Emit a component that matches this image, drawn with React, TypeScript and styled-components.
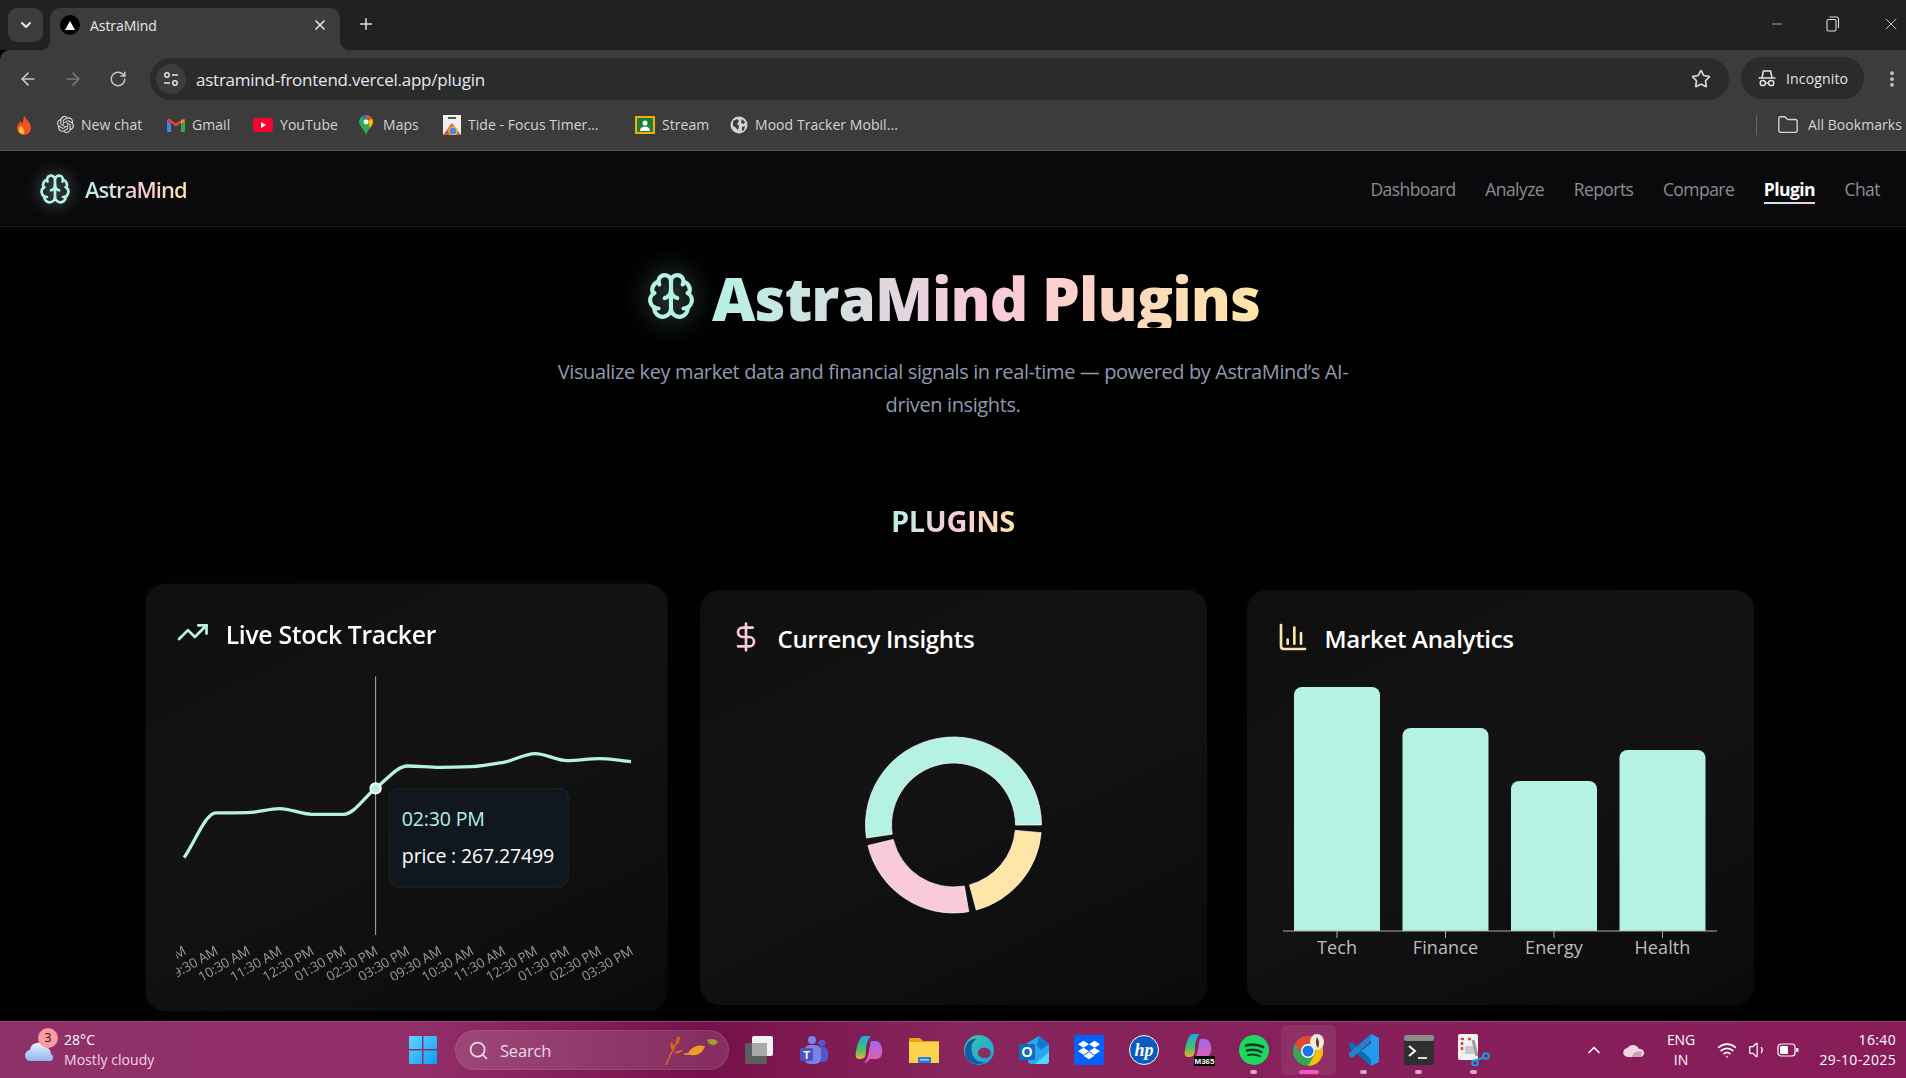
import React, { FC } from 'react';
import styled, { createGlobalStyle } from 'styled-components';
import {
  ArrowLeft,
  ArrowRight,
  Brain,
  ChartColumn,
  ChevronDown,
  ChevronUp,
  DollarSign,
  EllipsisVertical,
  Folder,
  Minus,
  Plus,
  RotateCw,
  Search,
  Star,
  TrendingUp,
  Volume1,
  Wifi,
  X,
} from 'lucide-react';
import { FaDropbox } from 'react-icons/fa';
import { SiOpenai } from 'react-icons/si';

const MINT = '#b5f2e4';
const PINK = '#f9c9dc';
const AMBER = '#ffe5a8';
const UI_FONT = `'Open Sans', 'Noto Sans', sans-serif`;

const GlobalStyle = createGlobalStyle`
  html, body {
    margin: 0;
    padding: 0;
    background: #000;
    overflow: hidden;
  }
  * { box-sizing: border-box; }
  #root { height: 100vh; }
`;

const Screen = styled.div`
  display: flex;
  flex-direction: column;
  height: 100vh;
  font-family: ${UI_FONT};
  overflow: hidden;
`;

/* ---------- browser chrome ---------- */

const TabStrip = styled.div`
  display: flex;
  align-items: flex-end;
  height: 50px;
  background: #202222;
  padding-left: 8px;
  color: #e6e6e6;
`;

const TabSearch = styled.div`
  width: 35px;
  height: 34px;
  margin-bottom: 8px;
  border-radius: 9px;
  background: #3c3c3c;
  display: flex;
  align-items: center;
  justify-content: center;
`;

const Tab = styled.div`
  position: relative;
  width: 290px;
  height: 42px;
  margin-left: 7px;
  padding: 0 12px 8px 10px;
  background: #3c3c3c;
  border-radius: 10px 10px 0 0;
  display: flex;
  align-items: center;
  gap: 10px;
  &::before,
  &::after {
    content: '';
    position: absolute;
    bottom: 0;
    width: 10px;
    height: 10px;
  }
  &::before {
    left: -10px;
    background: radial-gradient(circle at 0 0, #202222 10px, #3c3c3c 10.5px);
  }
  &::after {
    right: -10px;
    background: radial-gradient(circle at 100% 0, #202222 10px, #3c3c3c 10.5px);
  }
`;

const Favicon = styled.div`
  width: 20px;
  height: 20px;
  border-radius: 50%;
  background: #000;
  display: flex;
  align-items: center;
  justify-content: center;
  &::after {
    content: '';
    border-left: 5px solid transparent;
    border-right: 5px solid transparent;
    border-bottom: 9px solid #fff;
  }
`;

const TabTitle = styled.span`
  flex: 1;
  font-size: 14px;
  letter-spacing: -0.05px;
  color: #e8e8e8;
`;

const NewTab = styled.div`
  margin: 0 0 17px 17px;
  display: flex;
`;

const WindowControls = styled.div`
  margin-left: auto;
  align-self: flex-start;
  display: flex;
  align-items: center;
  height: 48px;
  padding-right: 5px;
  gap: 41px;
`;

const Toolbar = styled.div`
  display: flex;
  align-items: flex-end;
  height: 50px;
  padding-left: 5px;
  background: #3c3c3c;
  border-radius: 10px 0 0 0;
`;

const ToolButton = styled.div<{ $dim?: boolean }>`
  width: 45px;
  height: 42px;
  display: flex;
  align-items: center;
  justify-content: center;
  color: ${(p) => (p.$dim ? '#7a7a7a' : '#c7c7c7')};
`;

const Omnibox = styled.div`
  flex: 1;
  height: 42px;
  margin-left: 10px;
  padding: 0 18px 0 6px;
  background: #2b2b2b;
  border-radius: 21px;
  display: flex;
  align-items: center;
`;

const SiteInfo = styled.div`
  width: 30px;
  height: 30px;
  border-radius: 50%;
  background: #3c3c3c;
  display: flex;
  align-items: center;
  justify-content: center;
`;

const Url = styled.span`
  flex: 1;
  margin-left: 10px;
  font-size: 17px;
  letter-spacing: -0.24px;
  color: #e3e8ef;
`;

const IncognitoPill = styled.div`
  width: 123px;
  height: 42px;
  margin: 0 0 1px 12px;
  padding-left: 16px;
  gap: 9px;
  border-radius: 21px;
  background: #2b2b2b;
  color: #e3e3e3;
  font-size: 14px;
  letter-spacing: 0.15px;
  display: flex;
  align-items: center;
`;

const MenuDots = styled.div`
  width: 42px;
  height: 42px;
  padding-left: 18px;
  display: flex;
  align-items: center;
  color: #c7c7c7;
`;

const BookmarkBar = styled.div`
  display: flex;
  align-items: center;
  height: 51px;
  padding: 0 0 1px 16px;
  background: #3c3c3c;
  border-bottom: 1px solid #565656;
`;

const Bookmark = styled.div<{ $width: number }>`
  width: ${(p) => p.$width}px;
  display: flex;
  align-items: center;
  gap: 7px;
  font-size: 14px;
  letter-spacing: 0.05px;
  color: #cfd3da;
  white-space: nowrap;
`;

const BookmarkDivider = styled.div`
  width: 1px;
  height: 20px;
  margin-left: auto;
  background: #666;
`;

const AllBookmarks = styled.div`
  width: 149px;
  padding-left: 20px;
  display: flex;
  align-items: center;
  gap: 9px;
  font-size: 14px;
  letter-spacing: 0.05px;
  color: #cfd3da;
  white-space: nowrap;
`;

/* ---------- page ---------- */

const Page = styled.div`
  flex: 1;
  min-height: 0;
  background: #000;
  overflow: hidden;
`;

const NavBar = styled.nav`
  display: flex;
  align-items: center;
  height: 76px;
  padding: 0 26px 0 39px;
  background: #0a0a0c;
  border-bottom: 1px solid #1f1f22;
`;

const gradientText = `
  background: linear-gradient(90deg, ${MINT}, ${PINK}, ${AMBER});
  -webkit-background-clip: text;
  background-clip: text;
  color: transparent;
`;

const Logo = styled.div`
  display: flex;
  align-items: center;
  gap: 14px;
  svg {
    color: ${MINT};
    filter: drop-shadow(0 0 8px rgba(181, 242, 228, 0.55));
  }
`;

const LogoText = styled.span`
  ${gradientText}
  font-size: 22px;
  font-weight: 600;
  letter-spacing: -0.95px;
`;

const NavLinks = styled.div`
  margin-left: auto;
  display: flex;
  gap: 29.5px;
`;

const NavLink = styled.a<{ $active?: boolean }>`
  position: relative;
  font-size: 17.5px;
  letter-spacing: -0.55px;
  font-weight: ${(p) => (p.$active ? 700 : 400)};
  color: ${(p) => (p.$active ? '#fff' : '#8d8d92')};
  ${(p) =>
    p.$active &&
    `&::after {
      content: '';
      position: absolute;
      left: 0;
      right: 0;
      bottom: -3px;
      height: 2px;
      background: linear-gradient(90deg, ${MINT}, ${PINK});
    }`}
`;

const Hero = styled.section`
  display: flex;
  flex-direction: column;
  align-items: center;
  padding-top: 41px;
`;

const HeroTitleRow = styled.div`
  display: flex;
  align-items: center;
  gap: 16px;
  svg {
    margin-top: -4px;
    color: ${MINT};
    filter: drop-shadow(0 0 14px rgba(181, 242, 228, 0.5));
  }
`;

const HeroTitle = styled.h1`
  ${gradientText}
  margin: 0;
  font-size: 60px;
  line-height: 60px;
  font-weight: 800;
  letter-spacing: -0.95px;
`;

const HeroText = styled.p`
  width: 800px;
  margin: 27px 0 0;
  font-size: 20px;
  line-height: 33px;
  letter-spacing: -0.39px;
  text-align: center;
  color: #9199ae;
`;

const SectionTitle = styled.h2`
  ${gradientText}
  margin: 80px 0 0;
  font-size: 29px;
  line-height: 40px;
  font-weight: 700;
  letter-spacing: -0.4px;
`;

const CardGrid = styled.div`
  display: grid;
  grid-template-columns: repeat(3, 507px);
  gap: 40px;
  margin-top: 49px;
`;

const Card = styled.article<{ $lifted?: boolean }>`
  height: 415px;
  padding: 30px;
  border-radius: 20px;
  background: linear-gradient(155deg, #0f0f0f 0%, #131313 45%, #0b0b0b 100%);
  box-shadow: 0 0 24px rgba(255, 255, 255, 0.025);
  transform: ${(p) => (p.$lifted ? 'scale(1.03)' : 'none')};
`;

const CardHeader = styled.header<{ $color: string }>`
  display: flex;
  align-items: center;
  gap: 16px;
  height: 32px;
  margin-bottom: 23px;
  svg {
    margin-top: 1px;
    color: ${(p) => p.$color};
  }
`;

const CardTitle = styled.h3`
  margin: 4px 0 0;
  font-size: 24px;
  font-weight: 600;
  letter-spacing: -0.3px;
  color: #fff;
`;

const ChartBox = styled.div`
  position: relative;
  width: 447px;
  height: 300px;
  svg {
    display: block;
  }
`;

const ChartTooltip = styled.div`
  position: absolute;
  left: 206px;
  top: 113px;
  width: 175px;
  height: 97px;
  padding: 11px 12px;
  border-radius: 10px;
  background: #10171f;
  border: 1px solid #1f2630;
`;

const TooltipTime = styled.div`
  font-size: 19px;
  line-height: 36px;
  letter-spacing: -0.18px;
  color: ${MINT};
`;

const TooltipValue = styled.div`
  font-size: 19px;
  line-height: 36px;
  letter-spacing: -0.18px;
  color: #fff;
  white-space: nowrap;
`;

/* ---------- taskbar ---------- */

const Taskbar = styled.footer`
  display: flex;
  align-items: center;
  height: 57px;
  flex-shrink: 0;
  background: linear-gradient(90deg, #8e3068 0%, #922f68 22%, #76104a 37%, #88255c 50%, #861f5a 70%, #881c59 100%);
  border-top: 1px solid #9b4277;
  color: #fff;
`;

const Weather = styled.div`
  position: relative;
  width: 408px;
  height: 100%;
  display: flex;
  align-items: center;
  padding-left: 25px;
  gap: 7px;
  flex-shrink: 0;
`;

const WeatherBadge = styled.span`
  position: absolute;
  left: 38px;
  top: 6px;
  width: 20px;
  height: 20px;
  border-radius: 50%;
  background: #ff9aa2;
  color: #111;
  font-size: 12px;
  text-align: center;
  line-height: 20px;
`;

const WeatherText = styled.div`
  display: flex;
  flex-direction: column;
  font-size: 14px;
  line-height: 20px;
  letter-spacing: 0.05px;
  color: #f3d6e4;
  span:first-child {
    color: #fff;
  }
`;

const SearchBox = styled.div`
  width: 274px;
  height: 40px;
  margin-left: 17px;
  padding: 0 6px 0 12px;
  gap: 11px;
  border-radius: 20px;
  background: rgba(255, 255, 255, 0.13);
  border: 1px solid rgba(255, 255, 255, 0.08);
  display: flex;
  align-items: center;
  font-size: 16.5px;
  letter-spacing: -0.2px;
  color: #ecd9e4;
  svg:last-child {
    margin-left: auto;
  }
`;

const TaskIcons = styled.div`
  display: flex;
  margin-left: 2px;
`;

const TaskIcon = styled.div<{ $running?: boolean; $active?: boolean }>`
  position: relative;
  width: 55px;
  height: 50px;
  display: flex;
  align-items: center;
  justify-content: center;
  border-radius: 6px;
  background: ${(p) => (p.$active ? 'rgba(255,255,255,0.08)' : 'transparent')};
  &::after {
    content: '';
    display: ${(p) => (p.$running || p.$active ? 'block' : 'none')};
    position: absolute;
    left: 50%;
    bottom: 1px;
    width: ${(p) => (p.$active ? 20 : 7)}px;
    height: 4px;
    margin-left: ${(p) => (p.$active ? -10 : -3.5)}px;
    border-radius: 2px;
    background: ${(p) => (p.$active ? '#ff4fc4' : '#d9a9c4')};
  }
`;

const Tray = styled.div`
  margin-left: auto;
  padding-right: 10px;
  display: flex;
  align-items: center;
  color: #fff;
`;

const TrayIcon = styled.div<{ $width: number }>`
  width: ${(p) => p.$width}px;
  display: flex;
  justify-content: center;
`;

const TrayText = styled.div<{ $width: number; $align: string; $spacing: number }>`
  width: ${(p) => p.$width}px;
  text-align: ${(p) => p.$align};
  font-size: 14px;
  line-height: 20px;
  letter-spacing: ${(p) => p.$spacing}px;
  white-space: nowrap;
`;

/* ---------- small drawings ---------- */

const RestoreIcon = () => (
  <svg width="14" height="16" viewBox="0 0 14 16" fill="none" stroke="#ddd" strokeWidth="1.1">
    <rect x="1" y="3.5" width="9" height="11.5" rx="1.5" />
    <path d="M3.5 1h7a2 2 0 0 1 2 2v9" />
  </svg>
);

const SiteInfoIcon = () => (
  <svg width="16" height="16" viewBox="0 0 16 16" fill="none" stroke="#e3e3e3" strokeWidth="1.5">
    <circle cx="4" cy="4" r="2.2" />
    <path d="M9 4h6M1 12h6" />
    <circle cx="12" cy="12" r="2.2" />
  </svg>
);

const IncognitoIcon = () => (
  <svg width="20" height="20" viewBox="0 0 20 20" fill="none" stroke="#e3e3e3" strokeWidth="1.5">
    <path d="M1.5 10h17M5 10l1.4-7h7.2L15 10" />
    <circle cx="5.8" cy="15" r="2.6" />
    <circle cx="14.2" cy="15" r="2.6" />
    <path d="M8.4 15h3.2" />
  </svg>
);

const FireIcon = () => (
  <svg width="16" height="20" viewBox="0 0 16 20">
    <path d="M8 0c1 4 7 7 7 13a7 7 0 0 1-14 0c0-3 2-4 3-7 1 1 1.500 2 2 3 1-3 2-6 2-9z" fill="#f4511e" />
    <path d="M5 11c-3 2-3 8 2 8 2 0 2-5-2-8z" fill="#fbc02d" />
  </svg>
);

const GmailIcon = () => (
  <svg width="18" height="14" viewBox="0 0 18 14">
    <path d="M0 2v10.500A1.500 1.500 0 0 0 1.500 14H4V6z" fill="#4285f4" />
    <path d="M18 2v10.500a1.500 1.500 0 0 1-1.500 1.500H14V6z" fill="#34a853" />
    <path d="M0 2l9 6.500L18 2 16 0.500 9 5.500 2 0.500z" fill="#ea4335" />
    <path d="M14 6l4-4v-.5L14 3z" fill="#fbbc04" />
  </svg>
);

const YouTubeIcon = () => (
  <svg width="20" height="14" viewBox="0 0 20 14">
    <rect width="20" height="14" rx="4" fill="#ff0033" />
    <path d="M8 4l5 3-5 3z" fill="#fff" />
  </svg>
);

const MapsIcon = () => (
  <svg width="18" height="20" viewBox="-1 0 18 20">
    <path d="M7 0a7 7 0 0 1 7 7c0 4-5 7-7 13C5 14 0 11 0 7a7 7 0 0 1 7-7z" fill="#34a853" />
    <path d="M2 2.200A7 7 0 0 1 7 0v4.500z" fill="#1a73e8" />
    <path d="M7 0a7 7 0 0 1 6 3.500L9 6z" fill="#ea4335" />
    <path d="M14 7c0 2-1.500 4-3 6L9 6l4-2.500z" fill="#fbbc04" />
    <circle cx="7" cy="7" r="2.400" fill="#fff" />
  </svg>
);

const TideIcon = () => (
  <svg width="18" height="20" viewBox="0 0 18 20">
    <rect width="18" height="20" fill="#f1f1f1" />
    <rect x="5" y="2" width="8" height="2" fill="#555" />
    <path d="M0 20l9-12 9 12z" fill="#d9534f" />
    <circle cx="10" cy="16" r="4" fill="#4285f4" stroke="#fbbc04" strokeWidth="1.500" />
  </svg>
);

const StreamIcon = () => (
  <svg width="20" height="18" viewBox="0 0 20 18">
    <rect width="20" height="18" rx="1" fill="#f9ab00" />
    <rect x="2" y="2" width="16" height="14" fill="#188038" />
    <circle cx="10" cy="7" r="2.500" fill="#fff" />
    <path d="M5 15c0-3 2-4.500 5-4.500s5 1.500 5 4.500z" fill="#fff" />
  </svg>
);

const GlobeIcon = () => (
  <svg width="18" height="18" viewBox="0 0 18 18">
    <circle cx="9" cy="9" r="8.500" fill="#cfd3da" />
    <path d="M3 5l4-2 2 2-2 3 2 2-1 4-3-3-2-1zM12 3l3 3-1 2-3-1zM12 11l3-1-1 4-2 1z" fill="#3c3c3c" />
  </svg>
);

const CloudIcon = () => (
  <svg width="32" height="24" viewBox="0 0 32 24">
    <defs>
      <linearGradient id="cloud" x1="0" y1="0" x2="0" y2="1">
        <stop offset="0" stopColor="#e8f2ff" />
        <stop offset="1" stopColor="#8fb6ea" />
      </linearGradient>
    </defs>
    <circle cx="24" cy="5" r="4" fill="#f58a1f" />
    <path d="M6 23a5.500 5.500 0 0 1-1-11 8 8 0 0 1 15-3 7.500 7.500 0 0 1 6 7 4 4 0 0 1 0 7z" fill="url(#cloud)" />
  </svg>
);

const LeavesIcon = () => (
  <svg width="58" height="32" viewBox="0 0 58 32">
    <path d="M2 31C6 22 10 12 16 3" stroke="#d8641a" strokeWidth="1.500" fill="none" />
    <path d="M10 17c-4-2-4-6-3-9 3 2 4 5 3 9zM13 11c-2-3-1-6 1-9 2 3 2 6-1 9zM10 19c3-3 6-3 9-3-2 3-5 4-9 3z" fill="#d8641a" />
    <path d="M24 20c2-7 10-10 17-8-2 6-8 12-17 8z" fill="#f09a2a" />
    <path d="M20 20h6" stroke="#f09a2a" strokeWidth="1.500" />
    <path d="M43 6c4-2 9-1 11 2-2 4-8 5-11-2z" fill="#a89a2c" />
  </svg>
);

const WindowsIcon = () => (
  <svg width="30" height="30" viewBox="0 0 30 30">
    <defs>
      <linearGradient id="win" x1="0" y1="0" x2="1" y2="1">
        <stop offset="0" stopColor="#5fd6ff" />
        <stop offset="1" stopColor="#0f9bf2" />
      </linearGradient>
    </defs>
    <path d="M1 2a1 1 0 0 1 1-1h12v13H1zM15.500 1H28a1 1 0 0 1 1 1v12H15.500zM1 15.500h13V29H2a1 1 0 0 1-1-1zM15.500 15.500H29V28a1 1 0 0 1-1 1H15.500z" fill="url(#win)" />
  </svg>
);

const TaskViewIcon = () => (
  <svg width="30" height="30" viewBox="0 0 30 30">
    <rect x="1" y="8" width="22" height="21" rx="2" fill="#5d5d5d" />
    <rect x="8" y="1" width="21" height="20" rx="2" fill="#f2f2f2" />
    <rect x="8" y="8" width="15" height="13" fill="#a9a9a9" />
  </svg>
);

const TeamsIcon = () => (
  <svg width="30" height="30" viewBox="0 0 30 30">
    <circle cx="13" cy="5" r="4" fill="#7b83eb" />
    <circle cx="23" cy="8" r="3.500" fill="#5059c9" />
    <rect x="17" y="12" width="12" height="15" rx="5" fill="#5059c9" />
    <rect x="5" y="10" width="17" height="19" rx="6" fill="#7b83eb" />
    <rect x="1" y="13" width="13" height="13" rx="2" fill="#4b53bc" />
    <text x="7.500" y="23.500" fontSize="11" fontFamily="Liberation Sans" fontWeight="700" textAnchor="middle" fill="#fff">
      T
    </text>
  </svg>
);

const CopilotShapes = () => (
  <>
    <defs>
      <linearGradient id="cp1" x1="0" y1="0" x2="0" y2="1">
        <stop offset="0" stopColor="#1fa8e0" />
        <stop offset="0.6" stopColor="#45c06a" />
        <stop offset="1" stopColor="#f2b02e" />
      </linearGradient>
      <linearGradient id="cp2" x1="0" y1="0" x2="0" y2="1">
        <stop offset="0" stopColor="#9a6bf0" />
        <stop offset="1" stopColor="#f05aa0" />
      </linearGradient>
    </defs>
    <path d="M9 1h8c-3 3-5 8-5 14s-1 9-6 9H5C2 24 1 21 2 17 3 11 5 3 9 1z" fill="url(#cp1)" />
    <path d="M17 6h5c3 0 5 3 6 7 1 6-1 11-6 11h-6c-3 3-5 4-6 4 3-3 4-7 5-12s1-8 2-10z" fill="url(#cp2)" />
  </>
);

const CopilotIcon = () => (
  <svg width="30" height="30" viewBox="0 0 30 30">
    <CopilotShapes />
  </svg>
);

const ExplorerIcon = () => (
  <svg width="30" height="30" viewBox="0 0 30 30">
    <path d="M0 4a1 1 0 0 1 1-1h10l3 3h16v3H0z" fill="#e8a317" />
    <rect y="7" width="30" height="21" fill="#fcd34d" />
    <rect x="9" y="22" width="13" height="6" rx="1" fill="#1f7fd1" />
    <rect x="11" y="24" width="9" height="1.500" fill="#8fd0ff" />
  </svg>
);

const EdgeIcon = () => (
  <svg width="30" height="30" viewBox="0 0 30 30">
    <defs>
      <linearGradient id="edge" x1="0" y1="0" x2="1" y2="1">
        <stop offset="0" stopColor="#41c6a0" />
        <stop offset="1" stopColor="#1b9de2" />
      </linearGradient>
    </defs>
    <circle cx="15" cy="15" r="15" fill="url(#edge)" />
    <path d="M1 17C1 8 7 3 13 4 7 7 7 12 8 18c1 6 7 10 14 9-8 5-21 1-21-10z" fill="#0f5ca8" />
    <path d="M14 18c0-4 4-6 8-5 5 1 6 6 3 9-4 2-11 1-11-4z" fill="#8a2b62" />
  </svg>
);

const OutlookIcon = () => (
  <svg width="30" height="30" viewBox="0 0 30 30">
    <path d="M8 8L20 1l10 8v17a3 3 0 0 1-3 3H12a3 3 0 0 1-3-3z" fill="#28a8ea" />
    <path d="M20 1l10 8-8 6-4-4z" fill="#0f78d4" />
    <path d="M16 29l14-12v9a3 3 0 0 1-3 3z" fill="#50d9ff" />
    <rect y="9" width="16" height="16" rx="1" fill="#0f6cbd" />
    <text x="8" y="22" fontSize="14" fontFamily="Liberation Sans" fontWeight="700" textAnchor="middle" fill="#fff">
      O
    </text>
  </svg>
);

const DropboxTile = styled.div`
  width: 30px;
  height: 30px;
  background: #0061ff;
  display: flex;
  align-items: center;
  justify-content: center;
  color: #fff;
`;

const HpIcon = () => (
  <svg width="30" height="30" viewBox="0 0 30 30">
    <circle cx="15" cy="15" r="14.500" fill="#0b5cc0" stroke="#fff" strokeWidth="1" />
    <text x="15" y="21" fontSize="18" fontStyle="italic" fontFamily="Liberation Serif" fontWeight="700" textAnchor="middle" fill="#fff">
      hp
    </text>
  </svg>
);

const M365Icon = () => (
  <svg width="32" height="32" viewBox="0 0 32 32">
    <g transform="translate(0 -1)">
      <CopilotShapes />
    </g>
    <rect x="11" y="22" width="21" height="10" fill="#000" />
    <text x="21.500" y="30" fontSize="8" fontFamily="Liberation Sans" fontWeight="700" textAnchor="middle" fill="#fff">
      M365
    </text>
  </svg>
);

const SpotifyIcon = () => (
  <svg width="30" height="30" viewBox="0 0 30 30" fill="none" stroke="#143d21" strokeLinecap="round">
    <circle cx="15" cy="15" r="15" fill="#1ed760" stroke="none" />
    <path d="M7 10.500c6-1.500 12-1 17 1.500" strokeWidth="2.800" />
    <path d="M8 15.500c5-1.300 10-.8 14.500 1.500" strokeWidth="2.400" />
    <path d="M9 20c4-1 8-.7 12 1.200" strokeWidth="2" />
  </svg>
);

const ChromeIcon = () => (
  <svg width="32" height="32" viewBox="0 0 32 32">
    <circle cx="15" cy="17" r="15" fill="#34a853" />
    <path d="M15 2a15 15 0 0 1 13 7.500H15a7.500 7.500 0 0 0-6.500 11.200L2 9.500A15 15 0 0 1 15 2z" fill="#ea4335" />
    <path d="M28 9.500A15 15 0 0 1 15 32l6.500-11.300A7.500 7.500 0 0 0 15 9.500z" fill="#fbbc04" />
    <circle cx="15" cy="17" r="7" fill="#fff" />
    <circle cx="15" cy="17" r="5.500" fill="#1a73e8" />
    <ellipse cx="24" cy="8" rx="7" ry="8" fill="#efe9df" />
    <path d="M24 3c2 3 3 7 1 11-2-2-3-7-1-11z" fill="#7a3a2a" />
  </svg>
);

const VsCodeIcon = () => (
  <svg width="30" height="32" viewBox="0 0 30 32">
    <path d="M22 0l8 4v24l-8 4-13-13 13-10z" fill="#1f9cf0" />
    <path d="M0 10l3-2 19 17v7L0 13z" fill="#0a6fb5" />
    <path d="M0 22l3 2L22 7V0L0 19z" fill="#1a86d0" />
  </svg>
);

const TerminalIcon = () => (
  <svg width="30" height="30" viewBox="0 0 30 30" fill="none">
    <rect width="30" height="30" rx="2" fill="#2f2f2f" />
    <rect width="30" height="6" rx="2" fill="#8a8a8a" />
    <path d="M5 11l6 5-6 5" stroke="#fff" strokeWidth="2" />
    <path d="M14 23h9" stroke="#ddd" strokeWidth="2" />
  </svg>
);

const SnipIcon = () => (
  <svg width="32" height="32" viewBox="0 0 32 32" fill="none">
    <rect width="20" height="26" rx="2" fill="#f2f2f2" />
    <path d="M4 16V5h3M10 5h3" stroke="#d94a3d" strokeWidth="2.500" strokeDasharray="3 2" />
    <rect x="7" y="12" width="10" height="8" fill="#c9c9c9" />
    <path d="M15 6l4 16" stroke="#999" strokeWidth="3" />
    <circle cx="28" cy="22" r="2.800" stroke="#1e9be0" strokeWidth="2" />
    <circle cx="17" cy="29" r="2.800" stroke="#1e9be0" strokeWidth="2" />
    <path d="M19 26l7-3" stroke="#1e9be0" strokeWidth="2" />
  </svg>
);

const TrayCloud = () => (
  <svg width="22" height="14" viewBox="0 0 22 14">
    <path d="M5 14a4.500 4.500 0 0 1-.5-9A6.500 6.500 0 0 1 16 6a4 4 0 0 1 2 8z" fill="#f3d6e4" />
    <path d="M9 14c1-5 6-7 10-5l-1 5z" fill="#c9a0b8" />
  </svg>
);

const BatteryIcon = () => (
  <svg width="22" height="14" viewBox="0 0 22 14" fill="none">
    <rect x="1" y="1" width="17" height="12" rx="3" stroke="#fff" strokeWidth="1.200" />
    <rect x="3" y="3" width="8" height="8" rx="1" fill="#fff" />
    <rect x="19" y="5" width="2.500" height="4" rx="1" fill="#fff" />
  </svg>
);

/* ---------- charts ---------- */

const monotonePath = (pts: [number, number][]) => {
  const d = pts.slice(1).map((p, i) => (p[1] - pts[i][1]) / (p[0] - pts[i][0]));
  const m = pts.map((_, i) => {
    if (i === 0) return d[0];
    if (i === pts.length - 1) return d[i - 1];
    if (d[i - 1] * d[i] <= 0) return 0;
    return (2 * d[i - 1] * d[i]) / (d[i - 1] + d[i]);
  });
  let out = `M${pts[0][0]} ${pts[0][1]}`;
  for (let i = 1; i < pts.length; i++) {
    const h = (pts[i][0] - pts[i - 1][0]) / 3;
    out += `C${pts[i - 1][0] + h} ${pts[i - 1][1] + m[i - 1] * h} ${pts[i][0] - h} ${pts[i][1] - m[i] * h} ${pts[i][0]} ${pts[i][1]}`;
  }
  return out;
};

const PRICE_Y = [180.9, 137.5, 137.2, 133.3, 138.8, 138.8, 113.6, 91.9, 93.2, 92.6, 88.4, 79.9, 86.7, 84.8, 87.7];
const TIMES = ['09:30 AM', '10:30 AM', '11:30 AM', '12:30 PM', '01:30 PM', '02:30 PM', '03:30 PM'];
const TICKS = ['03:30 PM', ...TIMES, ...TIMES];
const xAt = (i: number) => 7.5 + i * 31;

const StockChart: FC = () => (
  <ChartBox>
    <svg width="447" height="300" viewBox="0 0 447 300">
      <line x1={xAt(6)} x2={xAt(6)} y1="5" y2="256" stroke="#aaa" strokeWidth="1" />
      <path
        d={monotonePath(PRICE_Y.map((y, i) => [xAt(i), y] as [number, number]))}
        fill="none"
        stroke={MINT}
        strokeWidth="3.2"
      />
      <circle cx={xAt(6)} cy={113.6} r="5" fill={MINT} stroke="#fff" strokeWidth="2" />
      {TICKS.map((t, i) => (
        <text
          key={i}
          x={xAt(i) + 3}
          y="274"
          transform={`rotate(-30 ${xAt(i) + 3} 274)`}
          textAnchor="end"
          fontSize="13"
          letterSpacing="-0.15"
          fill="#9a9a9a"
          fontFamily={UI_FONT}
        >
          {t}
        </text>
      ))}
    </svg>
    <ChartTooltip>
      <TooltipTime>02:30 PM</TooltipTime>
      <TooltipValue>price : 267.27499</TooltipValue>
    </ChartTooltip>
  </ChartBox>
);

const arc = (cx: number, cy: number, ro: number, ri: number, a0: number, a1: number) => {
  const pt = (r: number, a: number) => {
    const t = (a * Math.PI) / 180;
    return `${cx + r * Math.cos(t)} ${cy - r * Math.sin(t)}`;
  };
  const large = a1 - a0 > 180 ? 1 : 0;
  return `M${pt(ro, a0)}A${ro} ${ro} 0 ${large} 0 ${pt(ro, a1)}L${pt(ri, a1)}A${ri} ${ri} 0 ${large} 1 ${pt(ri, a0)}Z`;
};

const SLICES: [number, number, string][] = [
  [0, 188.5, MINT],
  [193.5, 280, PINK],
  [285, 355, AMBER],
];

const CurrencyChart: FC = () => (
  <ChartBox>
    <svg width="447" height="300" viewBox="0 0 447 300">
      {SLICES.map(([a0, a1, color]) => (
        <path key={color} d={arc(223.5, 150, 88, 62, a0, a1)} fill={color} stroke="#fff" strokeWidth="0.7" />
      ))}
    </svg>
  </ChartBox>
);

const MARKETS = [
  { name: 'Tech', x: 17, top: 12 },
  { name: 'Finance', x: 125.5, top: 53 },
  { name: 'Energy', x: 234, top: 106 },
  { name: 'Health', x: 342.5, top: 75 },
];
const AXIS_Y = 256;

const MarketChart: FC = () => (
  <ChartBox>
    <svg width="447" height="300" viewBox="0 0 447 300">
      {MARKETS.map((m) => (
        <g key={m.name}>
          <path
            d={`M${m.x} ${AXIS_Y}V${m.top + 8}a8 8 0 0 1 8-8h70a8 8 0 0 1 8 8V${AXIS_Y}Z`}
            fill={MINT}
          />
          <line x1={m.x + 43} x2={m.x + 43} y1={AXIS_Y} y2={AXIS_Y + 7} stroke="#aaa" />
          <text
            x={m.x + 43}
            y={AXIS_Y + 23}
            textAnchor="middle"
            fontSize="18"
            letterSpacing="0.1"
            fill="#bdbdbd"
            fontFamily={UI_FONT}
          >
            {m.name}
          </text>
        </g>
      ))}
      <line x1="6" x2="440" y1={AXIS_Y} y2={AXIS_Y} stroke="#aaa" />
    </svg>
  </ChartBox>
);

const App: FC = () => {
  return (
    <Screen>
      <GlobalStyle />
      <TabStrip>
        <TabSearch>
          <ChevronDown size={16} strokeWidth={3} />
        </TabSearch>
        <Tab>
          <Favicon />
          <TabTitle>AstraMind</TabTitle>
          <X size={16} strokeWidth={2.5} />
        </Tab>
        <NewTab>
          <Plus size={18} strokeWidth={2} />
        </NewTab>
        <WindowControls>
          <Minus size={16} strokeWidth={1} />
          <RestoreIcon />
          <X size={20} strokeWidth={1} />
        </WindowControls>
      </TabStrip>

      <Toolbar>
        <ToolButton>
          <ArrowLeft size={20} />
        </ToolButton>
        <ToolButton $dim>
          <ArrowRight size={20} />
        </ToolButton>
        <ToolButton>
          <RotateCw size={18} />
        </ToolButton>
        <Omnibox>
          <SiteInfo>
            <SiteInfoIcon />
          </SiteInfo>
          <Url>astramind-frontend.vercel.app/plugin</Url>
          <Star size={20} color="#d6d6d6" />
        </Omnibox>
        <IncognitoPill>
          <IncognitoIcon />
          Incognito
        </IncognitoPill>
        <MenuDots>
          <EllipsisVertical size={20} strokeWidth={2.5} />
        </MenuDots>
      </Toolbar>

      <BookmarkBar>
        <Bookmark $width={41}>
          <FireIcon />
        </Bookmark>
        <Bookmark $width={110}>
          <SiOpenai size={17} color="#ddd" />
          New chat
        </Bookmark>
        <Bookmark $width={86}>
          <GmailIcon />
          Gmail
        </Bookmark>
        <Bookmark $width={105}>
          <YouTubeIcon />
          YouTube
        </Bookmark>
        <Bookmark $width={85}>
          <MapsIcon />
          Maps
        </Bookmark>
        <Bookmark $width={192}>
          <TideIcon />
          Tide - Focus Timer...
        </Bookmark>
        <Bookmark $width={95}>
          <StreamIcon />
          Stream
        </Bookmark>
        <Bookmark $width={200}>
          <GlobeIcon />
          Mood Tracker Mobil...
        </Bookmark>
        <BookmarkDivider />
        <AllBookmarks>
          <Folder size={22} strokeWidth={1.5} />
          All Bookmarks
        </AllBookmarks>
      </BookmarkBar>

      <Page>
        <NavBar>
          <Logo>
            <Brain size={32} strokeWidth={2} />
            <LogoText>AstraMind</LogoText>
          </Logo>
          <NavLinks>
            <NavLink>Dashboard</NavLink>
            <NavLink>Analyze</NavLink>
            <NavLink>Reports</NavLink>
            <NavLink>Compare</NavLink>
            <NavLink $active>Plugin</NavLink>
            <NavLink>Chat</NavLink>
          </NavLinks>
        </NavBar>

        <Hero>
          <HeroTitleRow>
            <Brain size={50} strokeWidth={2} />
            <HeroTitle>AstraMind Plugins</HeroTitle>
          </HeroTitleRow>
          <HeroText>
            Visualize key market data and financial signals in real-time — powered by AstraMind’s AI-driven insights.
          </HeroText>
          <SectionTitle>PLUGINS</SectionTitle>
          <CardGrid>
            <Card $lifted>
              <CardHeader $color={MINT}>
                <TrendingUp size={32} />
                <CardTitle>Live Stock Tracker</CardTitle>
              </CardHeader>
              <StockChart />
            </Card>
            <Card>
              <CardHeader $color={PINK}>
                <DollarSign size={32} />
                <CardTitle>Currency Insights</CardTitle>
              </CardHeader>
              <CurrencyChart />
            </Card>
            <Card>
              <CardHeader $color={AMBER}>
                <ChartColumn size={32} />
                <CardTitle>Market Analytics</CardTitle>
              </CardHeader>
              <MarketChart />
            </Card>
          </CardGrid>
        </Hero>
      </Page>

      <Taskbar>
        <Weather>
          <CloudIcon />
          <WeatherBadge>3</WeatherBadge>
          <WeatherText>
            <span>28°C</span>
            <span>Mostly cloudy</span>
          </WeatherText>
        </Weather>
        <WindowsIcon />
        <SearchBox>
          <Search size={21} />
          Search
          <LeavesIcon />
        </SearchBox>
        <TaskIcons>
          <TaskIcon>
            <TaskViewIcon />
          </TaskIcon>
          <TaskIcon>
            <TeamsIcon />
          </TaskIcon>
          <TaskIcon>
            <CopilotIcon />
          </TaskIcon>
          <TaskIcon>
            <ExplorerIcon />
          </TaskIcon>
          <TaskIcon>
            <EdgeIcon />
          </TaskIcon>
          <TaskIcon>
            <OutlookIcon />
          </TaskIcon>
          <TaskIcon>
            <DropboxTile>
              <FaDropbox size={22} />
            </DropboxTile>
          </TaskIcon>
          <TaskIcon>
            <HpIcon />
          </TaskIcon>
          <TaskIcon>
            <M365Icon />
          </TaskIcon>
          <TaskIcon $running>
            <SpotifyIcon />
          </TaskIcon>
          <TaskIcon $active>
            <ChromeIcon />
          </TaskIcon>
          <TaskIcon $running>
            <VsCodeIcon />
          </TaskIcon>
          <TaskIcon $running>
            <TerminalIcon />
          </TaskIcon>
          <TaskIcon $running>
            <SnipIcon />
          </TaskIcon>
        </TaskIcons>
        <Tray>
          <TrayIcon $width={40}>
            <ChevronUp size={20} />
          </TrayIcon>
          <TrayIcon $width={40}>
            <TrayCloud />
          </TrayIcon>
          <TrayText $width={54} $align="center" $spacing={-0.1}>
            ENG
            <br />
            IN
          </TrayText>
          <TrayIcon $width={37}>
            <Wifi size={20} />
          </TrayIcon>
          <TrayIcon $width={26}>
            <Volume1 size={20} strokeWidth={1.5} />
          </TrayIcon>
          <TrayIcon $width={34}>
            <BatteryIcon />
          </TrayIcon>
          <TrayText $width={91} $align="right" $spacing={0.35}>
            16:40
            <br />
            29-10-2025
          </TrayText>
        </Tray>
      </Taskbar>
    </Screen>
  );
};

export default React.memo(App);
